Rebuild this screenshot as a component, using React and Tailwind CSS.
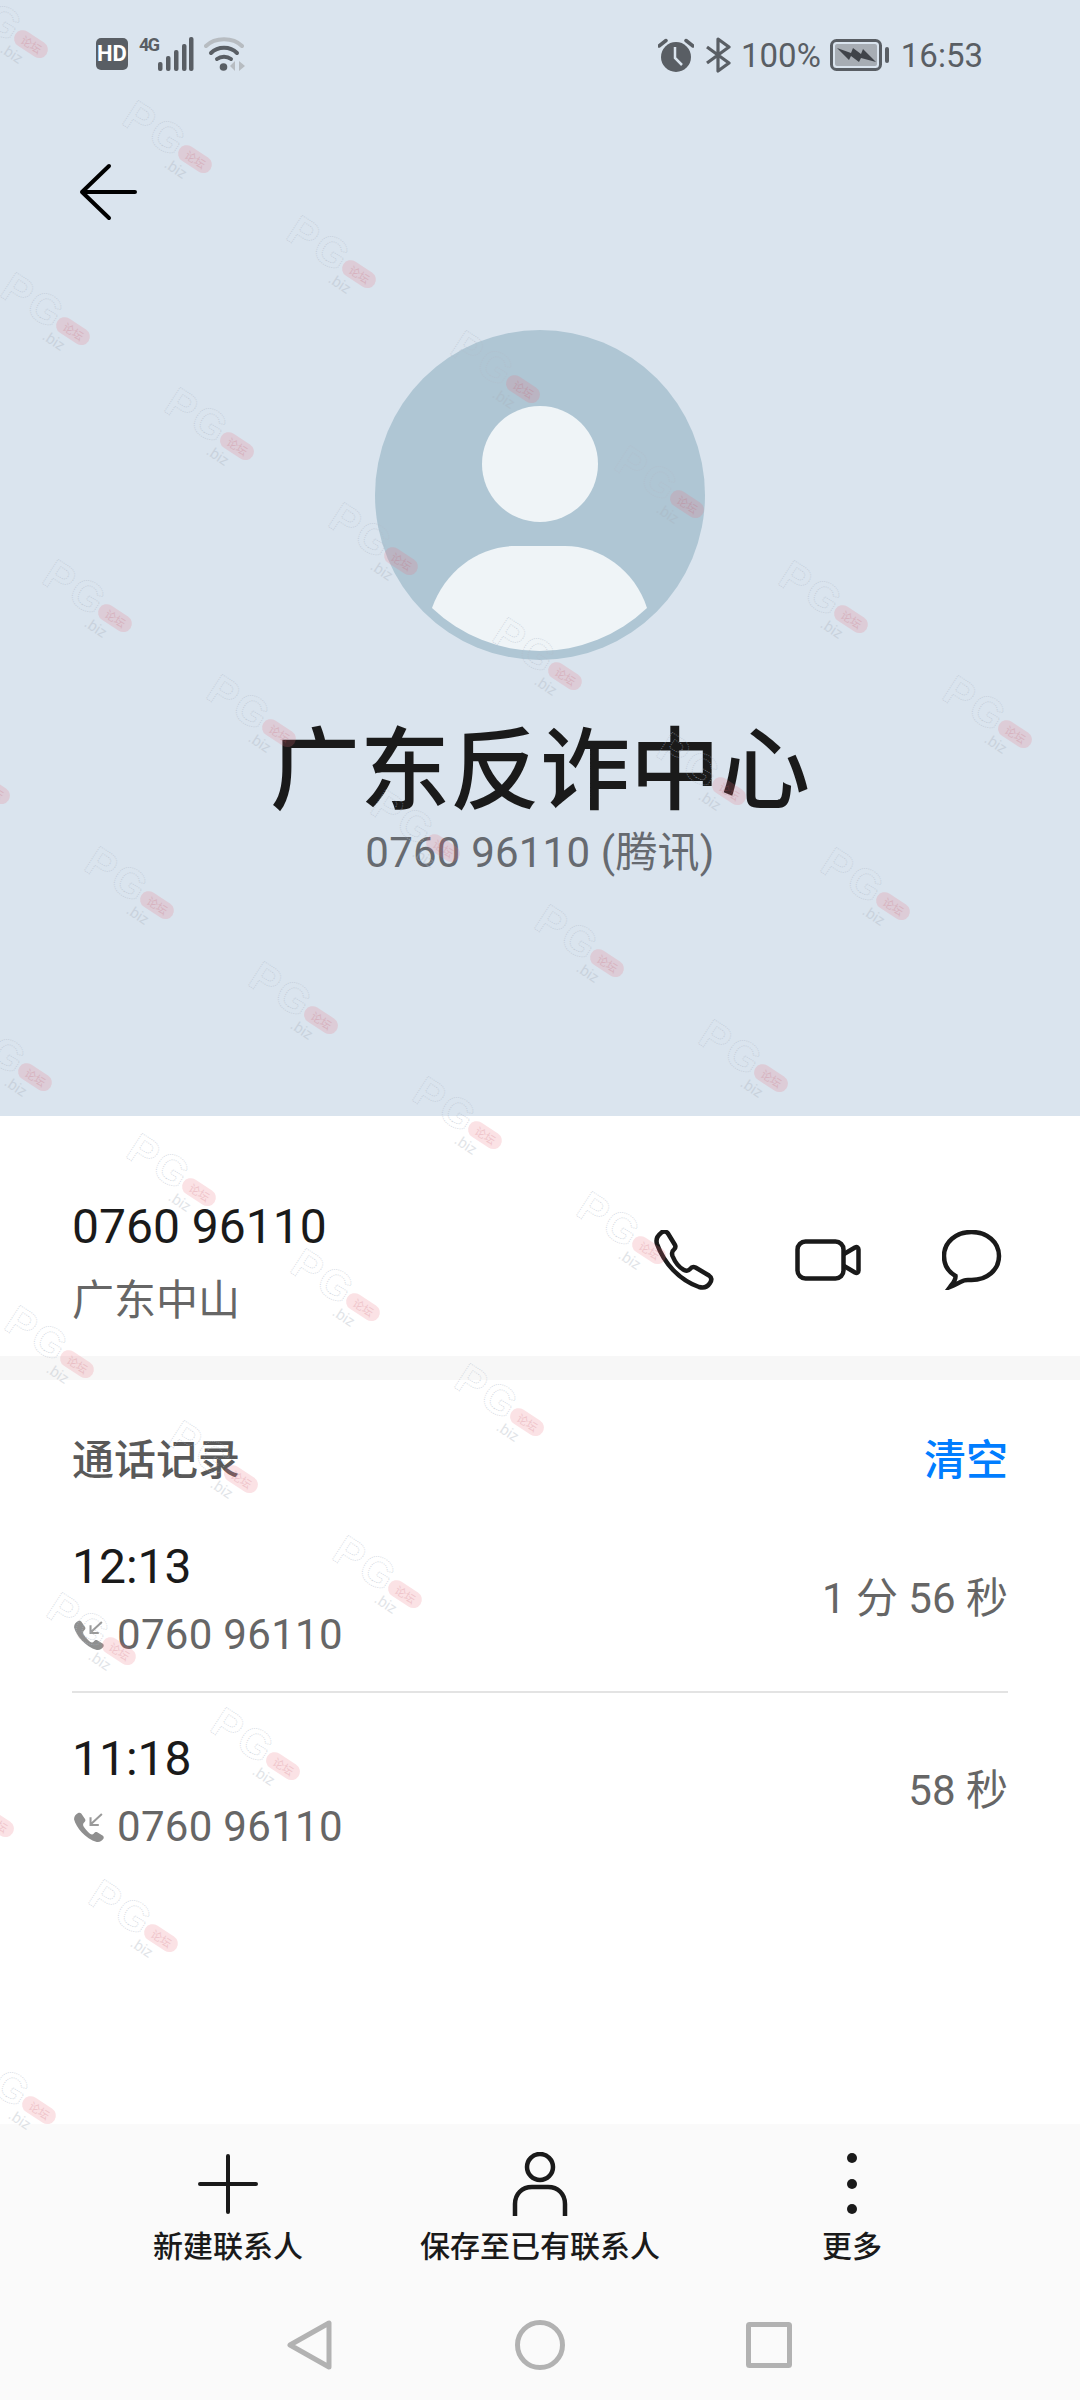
import React from 'react';

// watermark lattice, read off the reference
const marks = [];
for (let i = -1; i <= 5; i++) {
  for (let j = 0; j <= 8; j++) {
    const x = 168 + 164 * i - 122 * j;
    const y = 141 + 115 * i + 172 * j;
    if (x > -60 && x < 1100 && y < 2124) marks.push({ x, y });
  }
}

const Watermark = ({ x, y }) => (
  <svg
    className="absolute"
    style={{ left: x - 80, top: y - 70 }}
    width="160"
    height="140"
    viewBox="0 0 160 140"
  >
    <g transform="rotate(33 80 70)">
      <text
        x="30"
        y="81"
        fontFamily="Liberation Sans, sans-serif"
        fontWeight="700"
        fontSize="42"
        letterSpacing="3"
        fill="none"
        stroke="#b4bdcb"
        strokeWidth="0.8"
        strokeDasharray="1 1.2"
        opacity="0.6"
      >
        PG
      </text>
      <rect x="94" y="62" width="37" height="17" rx="8.5" fill="#e9707e" opacity="0.2" />
      <text x="102" y="75" fontFamily="Noto Sans CJK SC, sans-serif" fontSize="11" fill="#c25565" opacity="0.2">
        论坛
      </text>
      <text x="90" y="94" fontFamily="Liberation Sans, sans-serif" fontSize="15" fill="#aab2bd" opacity="0.35">
        .biz
      </text>
    </g>
  </svg>
);

const StatusLeft = () => (
  <div className="flex items-start">
    <div className="mt-[1px] w-[32px] h-[32px] rounded-[5px] bg-[#595e64] flex items-center justify-center text-white font-bold text-[22px] leading-none">
      HD
    </div>
    <div className="ml-[11px] w-[20px] text-[18px] leading-[16px] font-bold text-[#595e64] tracking-[-1.5px]">4G</div>
    <svg className="-ml-[1px]" width="36" height="34" viewBox="0 0 36 34" fill="#595e64">
      <rect x="0" y="25" width="4.5" height="9" rx="2" />
      <rect x="8" y="19" width="4.5" height="15" rx="2" />
      <rect x="16" y="13" width="4.5" height="21" rx="2" />
      <rect x="24" y="7" width="4.5" height="27" rx="2" />
      <rect x="31" y="0" width="4.5" height="34" rx="2" />
    </svg>
    <svg className="ml-[10px]" width="42" height="34" viewBox="0 0 42 34" fill="none">
      <path d="M2 9 C11 0 29 0 38 9" stroke="#b7bcc1" strokeWidth="4" strokeLinecap="round" />
      <path d="M7 16 C14 9 26 9 33 16" stroke="#595e64" strokeWidth="4" strokeLinecap="round" />
      <path d="M13 22 C17 19 23 19 27 22" stroke="#595e64" strokeWidth="4" strokeLinecap="round" />
      <circle cx="19.5" cy="30" r="3.8" fill="#595e64" />
      <path d="M31 24 L26 29 L31 34 Z" fill="#b7bcc1" />
      <path d="M35 24 L41 29 L35 34 Z" fill="#b7bcc1" />
    </svg>
  </div>
);

const StatusRight = () => (
  <div className="flex items-center text-[#595e64] text-[33px] leading-none">
    <svg width="36" height="34" viewBox="0 0 36 34" fill="#595e64">
      <circle cx="18" cy="19" r="15" />
      <path d="M1 8 L8 2.5 M35 8 L28 2.5" stroke="#595e64" strokeWidth="3.5" strokeLinecap="round" />
      <path d="M17 9 V20 L24 27" stroke="#dae4ee" strokeWidth="2.5" fill="none" />
    </svg>
    <svg className="ml-[11px]" width="27" height="36" viewBox="0 0 27 36" fill="none">
      <path d="M2 10 L24 26 L13 34 V2 L24 10 L2 26" stroke="#595e64" strokeWidth="3.2" strokeLinejoin="round" />
    </svg>
    <span className="ml-[9px]">100%</span>
    <svg className="ml-[9px]" width="60" height="32" viewBox="0 0 60 32" fill="none">
      <rect x="1.5" y="1.5" width="49" height="29" rx="5" stroke="#595e64" strokeWidth="3" />
      <rect x="5" y="5" width="42" height="22" rx="2" fill="#a7adb4" />
      <path d="M7 9 L21 14 L23 9 L31 15 L33 10 L46 23 L31 19 L29 23 L21 17 L19 21 Z" fill="#3f4349" />
      <rect x="55" y="8" width="4" height="16" rx="2" fill="#595e64" />
    </svg>
    <span className="ml-[11px]">16:53</span>
  </div>
);

const Avatar = () => (
  <svg width="330" height="330" viewBox="0 0 330 330">
    <circle cx="165" cy="165" r="165" fill="#afc6d4" />
    <circle cx="165" cy="134" r="58" fill="#eff4f7" />
    <path
      d="M57 278 C70 240 105 216 140 216 H190 C225 216 260 240 272 278 A156 156 0 0 1 57 278 Z"
      fill="#eff4f7"
    />
  </svg>
);

const PhoneIcon = () => (
  <svg width="60" height="60" viewBox="0 0 60 60" fill="none" stroke="#1a1a1a" strokeWidth="4.5" strokeLinejoin="round">
    <path d="M7 3 C9 1 12 1 14 3.5 L21 15 C22 17 21.5 18 20 19.5 C18 21 17.5 23 18.5 26 C21 32 26 38 30 40 C33 41.5 34.5 41 36 39 C37.5 37 39.5 36.5 41.5 37.5 L55 45.5 C58 47.5 58 50 56 53 C53.5 57 50 58.5 45 57 C25 50 10 33 3 14 C1.5 9 3 6 7 3 Z" />
  </svg>
);

const VideoIcon = () => (
  <svg width="66" height="42" viewBox="0 0 66 42" fill="none" stroke="#1a1a1a" strokeWidth="4.5" strokeLinejoin="round">
    <rect x="2.5" y="2.5" width="46" height="37" rx="8" />
    <path d="M49 15 L60 8.5 C62 7.5 63.5 8.5 63.5 10.5 V31.5 C63.5 33.5 62 34.5 60 33.5 L49 27" />
  </svg>
);

const MessageIcon = () => (
  <svg width="60" height="60" viewBox="0 0 60 60" fill="none" stroke="#1a1a1a" strokeWidth="4.5" strokeLinejoin="miter">
    <path d="M13.5 46 C5 41 2 33 2 26 C2 12 14 2 29.5 2 C45 2 57 12 57 26 C57 40 45 50 29.5 50 C26 50 24.5 49.5 22 50.5 C17 52.5 13 55 8 57 C11 53 14 50 13.5 46 Z" />
  </svg>
);

const IncomingIcon = () => (
  <svg className="shrink-0 ml-[1px]" width="33" height="33" viewBox="0 0 32 32" fill="none">
    <path
      d="M5 2 C3 3 1 5 1 8 C3 16 12 27 23 30 C26 30.5 28 29 29.5 27 C30 26 30 25 29 24 L23.5 20.5 C22 20 21 20.5 20 22 C19 23 18 23 16.5 22 C14 20 11.5 17 10 14.5 C9.5 13 10 12 11 11 C12 10 12.5 9 11.5 7.5 L8 2.5 C7 1.5 6 1.5 5 2 Z"
      fill="#8f8f8f"
    />
    <path d="M28 3 L17 13 M17 6 V13.5 H25" stroke="#9a9a9a" strokeWidth="2" />
  </svg>
);

const CallRow = ({ time, duration }) => (
  <div className="flex items-center justify-between">
    <div>
      <div className="text-[48px] leading-[56px] text-[#1a1a1a]">{time}</div>
      <div className="mt-[15px] flex items-center text-[42px] leading-[50px] text-[#666666]">
        <IncomingIcon />
        <span className="ml-[11px] tracking-[0.3px]">0760 96110</span>
      </div>
    </div>
    <div className="-mt-[2px] text-[42px] leading-[50px] text-[#666666]">{duration}</div>
  </div>
);

const BarButton = ({ icon, label, className }) => (
  <div className={`flex flex-col items-center ${className}`}>
    <div className="h-[66px] flex items-center justify-center">{icon}</div>
    <div className="mt-[11px] text-[30px] leading-[38px] font-medium text-[#1a1a1a] whitespace-nowrap">{label}</div>
  </div>
);

const App = () => {
  return (
    <div className="relative w-[1080px] h-[2400px] overflow-hidden bg-white flex flex-col font-[Roboto,'Noto_Sans_CJK_SC',sans-serif]">
      {/* Header */}
      <div className="h-[1116px] shrink-0 bg-[#dae4ee] flex flex-col">
        <div className="h-[72px] pt-[37px] pl-[96px] pr-[97px] flex items-start justify-between">
          <StatusLeft />
          <StatusRight />
        </div>
        <div className="mt-[90px] pl-[78px]">
          <svg width="62" height="60" viewBox="0 0 62 60" fill="none" stroke="#000000" strokeWidth="4" strokeLinecap="round" strokeLinejoin="round">
            <path d="M57 30 H4 M31 4 L4 30 L31 56" />
          </svg>
        </div>
        <div className="mt-[108px] flex justify-center">
          <Avatar />
        </div>
        <div className="mt-[53px] text-center text-[90px] leading-[100px] font-medium text-[#1a1a1a] font-['Noto_Sans_CJK_SC',sans-serif]">
          广东反诈中心
        </div>
        <div className="mt-[15px] text-center text-[42px] leading-[50px] tracking-[0.2px] text-[#666a70]">0760 96110 (腾讯)</div>
      </div>

      {/* Number row */}
      <div className="h-[240px] shrink-0 pl-[72px] pr-[78px] flex items-start justify-between">
        <div className="pt-[81px]">
          <div className="text-[48px] leading-[60px] text-[#1a1a1a]">0760 96110</div>
          <div className="mt-[16px] text-[42px] leading-[56px] text-[#666666]">广东中山</div>
        </div>
        <div className="pt-[114px] flex items-center">
          <PhoneIcon />
          <div className="ml-[81px]">
            <VideoIcon />
          </div>
          <div className="ml-[81px]">
            <MessageIcon />
          </div>
        </div>
      </div>
      <div className="h-[24px] shrink-0 bg-[#f7f7f7]" />

      {/* Call log */}
      <div className="flex-1 px-[72px]">
        <div className="mt-[55px] flex items-center justify-between text-[42px] leading-[52px] font-medium">
          <span className="text-[#595959]">通话记录</span>
          <span className="text-[#007dff]">清空</span>
        </div>
        <div className="mt-[52px] pb-[31px] border-b-[2px] border-[#e3e3e3]">
          <CallRow time="12:13" duration="1 分 56 秒" />
        </div>
        <div className="mt-[38px]">
          <CallRow time="11:18" duration="58 秒" />
        </div>
      </div>

      {/* Bottom bar */}
      <div className="h-[276px] shrink-0 bg-[#fafafa] flex flex-col">
        <div className="h-[186px] pt-[27px] flex">
          <BarButton
            className="w-[456px]"
            label="新建联系人"
            icon={
              <svg width="60" height="60" viewBox="0 0 60 60" stroke="#1a1a1a" strokeWidth="4" strokeLinecap="round">
                <path d="M30 2 V58 M2 30 H58" />
              </svg>
            }
          />
          <BarButton
            className="w-[168px]"
            label="保存至已有联系人"
            icon={
              <svg width="56" height="64" viewBox="0 0 56 64" fill="none" stroke="#1a1a1a" strokeWidth="4.5">
                <circle cx="28" cy="15" r="13" />
                <path d="M3 64 V52 C3 42 10 35 20 35 H36 C46 35 53 42 53 52 V64" />
              </svg>
            }
          />
          <BarButton
            className="w-[456px]"
            label="更多"
            icon={
              <svg width="12" height="62" viewBox="0 0 12 62" fill="#1a1a1a">
                <circle cx="6" cy="5" r="5" />
                <circle cx="6" cy="31" r="5" />
                <circle cx="6" cy="56" r="5" />
              </svg>
            }
          />
        </div>
        <div className="mt-[9px] pr-[3px] h-[52px] flex items-center justify-center">
          <svg width="46" height="52" viewBox="0 0 46 52" fill="none" stroke="#b2b2b2" strokeWidth="5" strokeLinejoin="round">
            <path d="M43 4 V48 L4 26 Z" />
          </svg>
          <svg className="ml-[183px]" width="50" height="50" viewBox="0 0 50 50" fill="none" stroke="#b2b2b2" strokeWidth="5">
            <circle cx="25" cy="25" r="22.5" />
          </svg>
          <svg className="ml-[181px]" width="46" height="46" viewBox="0 0 46 46" fill="none" stroke="#b2b2b2" strokeWidth="5" strokeLinejoin="round">
            <rect x="2.5" y="2.5" width="41" height="41" rx="1" />
          </svg>
        </div>
      </div>

      {/* Watermark over everything */}
      <div className="absolute inset-0 pointer-events-none">
        {marks.map((m) => (
          <Watermark key={`${m.x}-${m.y}`} x={m.x} y={m.y} />
        ))}
      </div>
    </div>
  );
};

export default App;
